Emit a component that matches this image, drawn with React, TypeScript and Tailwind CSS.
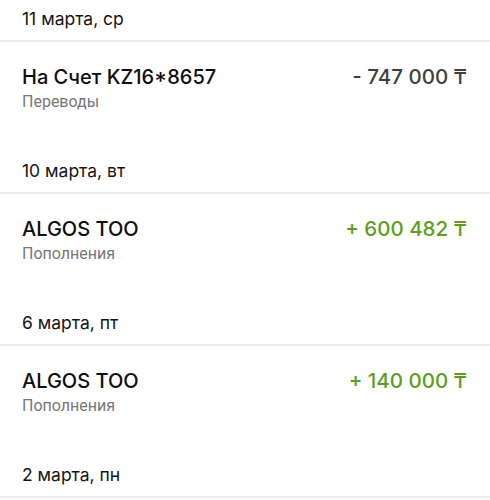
import React from "react";

type Tx = { date: string; title?: string; category?: string; amount?: string; positive?: boolean };

const items: Tx[] = [
  { date: "11 марта, ср", title: "На Счет KZ16*8657", category: "Переводы", amount: "- 747 000 ₸", positive: false },
  { date: "10 марта, вт", title: "ALGOS TOO", category: "Пополнения", amount: "+ 600 482 ₸", positive: true },
  { date: "6 марта, пт", title: "ALGOS TOO", category: "Пополнения", amount: "+ 140 000 ₸", positive: true },
  { date: "2 марта, пн" },
];

const sans = "Inter, 'Noto Sans', 'DejaVu Sans', sans-serif";

function DateHeader({ text, first }: { text: string; first: boolean }) {
  return (
    <div
      className={`${first ? "h-[40px]" : "h-[54px]"} flex items-end px-[22px] pb-[10px] text-[17.5px] leading-[22px] text-[#141414]`}
      style={{ fontFamily: sans }}
    >
      {text}
    </div>
  );
}

export default function App() {
  return (
    <div className="w-[490px] h-[500px] overflow-hidden bg-white">
      {items.map((it, i) => (
        <div key={i} className="flex flex-col">
          <DateHeader text={it.date} first={i === 0} />
          <div className="h-[2px] bg-[#ececec]" />
          {it.title && (
            <div className="h-[96px] flex justify-between px-[22px] pt-[21px]">
              <div className="flex flex-col">
                <div
                  className="text-[20px] leading-[28px] font-medium text-[#0d0d0d]"
                  style={{ fontFamily: sans }}
                >
                  {it.title}
                </div>
                <div
                  className="text-[16px] leading-[20px] text-[#777777] mt-[1px]"
                  style={{ fontFamily: "Roboto, 'Noto Sans', sans-serif" }}
                >
                  {it.category}
                </div>
              </div>
              <div
                className={`text-[20.5px] leading-[28px] font-medium pr-[1px] ${it.positive ? "text-[#5c9e1e]" : "text-[#3f3f3f]"}`}
                style={{ fontFamily: sans }}
              >
                {it.amount}
              </div>
            </div>
          )}
        </div>
      ))}
    </div>
  );
}
